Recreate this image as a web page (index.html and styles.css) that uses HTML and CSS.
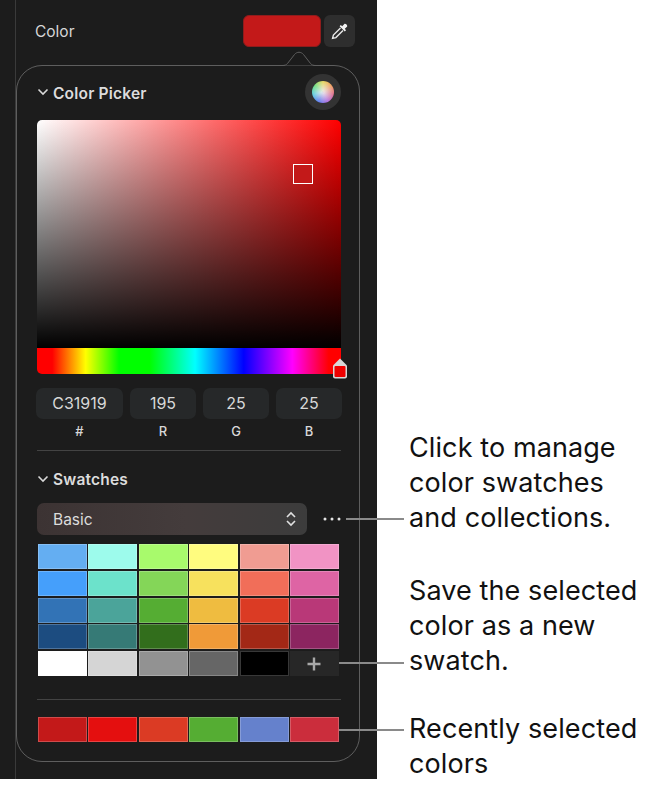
FILE: index.html
```html
<!DOCTYPE html>
<html lang="en">
<head>
  <meta charset="UTF-8">
  <title>Color Picker</title>
  <link rel="stylesheet" href="styles.css">
</head>
<body>
  <div class="page">
    <div class="panel">
      <div class="color-row">
        <span class="color-label">Color</span>
        <div class="color-well"></div>
        <button class="dropper">
          <svg width="20" height="20" viewBox="0 0 20 20">
            <path d="M10.5 7 L3.4 14.1 L2.6 17.4 L5.9 16.6 L13 9.5" fill="none" stroke="#e8e8e8" stroke-width="1.4"/>
            <path d="M9.6 5.2 L14.8 10.4 L16 9.2 L14.8 7.8 L17.2 5.4 A2.3 2.3 0 0 0 14.6 2.8 L12.2 5.2 L10.8 4 Z" fill="#f2f2f2"/>
          </svg>
        </button>
      </div>

      <div class="popover">
        <svg class="popover-arrow" width="44" height="16" viewBox="0 0 44 16">
          <path d="M0 15.5 H5 C8 15.5 9 15 10.5 13.5 L17.5 4.5 C20 1.5 24 1.5 26.5 4.5 L33.5 13.5 C35 15 36 15.5 39 15.5 H44" fill="#1c1c1c" stroke="#5e5e5e"/>
        </svg>

        <div class="section-head picker-head">
          <svg class="chevron" width="12" height="8" viewBox="0 0 12 8"><path d="M1.5 1.5 L6 6 L10.5 1.5" fill="none" stroke="#d8d8d8" stroke-width="1.6"/></svg>
          <span class="picker-title">Color Picker</span>
          <div class="wheel-btn"><div class="wheel"></div></div>
        </div>

        <div class="picker">
          <div class="picker-mark"></div>
        </div>
        <div class="hue">
          <svg class="hue-thumb" width="16" height="21" viewBox="0 0 16 21">
            <path d="M8 0.5 L15 7.5 V18.5 A2 2 0 0 1 13 20.5 H3 A2 2 0 0 1 1 18.5 V7.5 Z" fill="#d8d8d8"/>
            <rect x="2.5" y="8" width="11" height="11" rx="1" fill="#f00000"/>
          </svg>
        </div>

        <div class="fields">
          <div class="field">C31919</div>
          <div class="field">195</div>
          <div class="field">25</div>
          <div class="field">25</div>
          <div class="field-label">#</div>
          <div class="field-label">R</div>
          <div class="field-label">G</div>
          <div class="field-label">B</div>
        </div>

        <div class="rule rule-top"></div>

        <div class="section-head swatch-head">
          <svg class="chevron" width="12" height="8" viewBox="0 0 12 8"><path d="M1.5 1.5 L6 6 L10.5 1.5" fill="none" stroke="#d8d8d8" stroke-width="1.6"/></svg>
          <span>Swatches</span>
        </div>

        <div class="select-row">
          <div class="select">
            <span>Basic</span>
            <svg width="10" height="16" viewBox="0 0 10 16">
              <path d="M1 6 L5 2 L9 6 M1 10 L5 14 L9 10" fill="none" stroke="#e0e0e0" stroke-width="1.6"/>
            </svg>
          </div>
          <svg class="more" width="18" height="4" viewBox="0 0 18 4">
            <circle cx="2" cy="2" r="1.5" fill="#e4e4e4"/>
            <circle cx="9" cy="2" r="1.5" fill="#e4e4e4"/>
            <circle cx="16" cy="2" r="1.5" fill="#e4e4e4"/>
          </svg>
        </div>

        <div class="swatches">
          <div class="sw" style="background:#64aef2"></div>
          <div class="sw" style="background:#9dfbec"></div>
          <div class="sw" style="background:#a8fa6c"></div>
          <div class="sw" style="background:#fffc7f"></div>
          <div class="sw" style="background:#f09c92"></div>
          <div class="sw" style="background:#f193c4"></div>

          <div class="sw" style="background:#459ffb"></div>
          <div class="sw" style="background:#6ce2cb"></div>
          <div class="sw" style="background:#84d658"></div>
          <div class="sw" style="background:#f7e15d"></div>
          <div class="sw" style="background:#f16e59"></div>
          <div class="sw" style="background:#de64a4"></div>

          <div class="sw" style="background:#3273b6"></div>
          <div class="sw" style="background:#4ba49a"></div>
          <div class="sw" style="background:#55ad33"></div>
          <div class="sw" style="background:#efbc40"></div>
          <div class="sw" style="background:#db3b24"></div>
          <div class="sw" style="background:#b93878"></div>

          <div class="sw" style="background:#1c4c80"></div>
          <div class="sw" style="background:#367a76"></div>
          <div class="sw" style="background:#326e1c"></div>
          <div class="sw" style="background:#f09a38"></div>
          <div class="sw" style="background:#a32816"></div>
          <div class="sw" style="background:#8c2560"></div>

          <div class="sw sw-flat" style="background:#ffffff"></div>
          <div class="sw" style="background:#d5d5d5"></div>
          <div class="sw" style="background:#929292"></div>
          <div class="sw" style="background:#666666"></div>
          <div class="sw" style="background:#000000"></div>
          <div class="sw-add">
            <svg width="14" height="14" viewBox="0 0 14 14"><path d="M7 0.5 V13.5 M0.5 7 H13.5" stroke="#a8a8a8" stroke-width="2.4"/></svg>
          </div>
        </div>

        <div class="rule rule-bottom"></div>

        <div class="swatches">
          <div class="sw" style="background:#c31919"></div>
          <div class="sw" style="background:#e40f0f"></div>
          <div class="sw" style="background:#db3b24"></div>
          <div class="sw" style="background:#55ad33"></div>
          <div class="sw" style="background:#6581cc"></div>
          <div class="sw" style="background:#cb2d3c"></div>
        </div>
      </div>
    </div>

    <div class="notes">
      <p class="note">Click to manage color swatches and collections.</p>
      <p class="note note-save">Save the selected color as a new swatch.</p>
      <p class="note note-recent">Recently selected colors</p>
    </div>

    <div class="leader leader-manage"></div>
    <div class="leader leader-save"></div>
    <div class="leader leader-recent"></div>
  </div>
</body>
</html>
```

FILE: styles.css
```css
* { margin: 0; padding: 0; box-sizing: border-box; }
body {
  background: #fff;
  font-family: "Inter", "Liberation Sans", sans-serif;
}
.page {
  position: relative;
  display: flex;
  width: 670px;
  height: 788px;
  overflow: hidden;
}

/* dark inspector panel */
.panel {
  width: 377px;
  height: 779px;
  padding-top: 15px;
  background: linear-gradient(to right, #1c1c1c 15px, #3a3a3a 15px, #3a3a3a 16px, #1c1c1c 16px);
}
.color-row {
  display: flex;
  align-items: center;
  height: 32px;
  padding: 0 22px 0 35px;
}
.color-label {
  flex: 1;
  font-size: 15.5px;
  color: #d6d6d6;
}
.color-well {
  width: 78px;
  height: 32px;
  border-radius: 6px;
  background: #c31919;
  border: 1px solid #8f1c1c;
}
.dropper {
  display: flex;
  align-items: center;
  justify-content: center;
  width: 31px;
  height: 32px;
  margin-left: 3px;
  border: none;
  border-radius: 6px;
  background: #2e2e2e;
}

/* popover */
.popover {
  position: relative;
  width: 344px;
  height: 697px;
  margin: 18px 0 0 16px;
  padding: 0 18px 0 20px;
  border: 1px solid #5e5e5e;
  border-radius: 26px;
  background: #1c1c1c;
}
.popover-arrow {
  position: absolute;
  top: -16px;
  left: 260px;
  overflow: visible;
}
.section-head {
  display: flex;
  align-items: center;
  gap: 4px;
  font-size: 15.5px;
  font-weight: 600;
  letter-spacing: 0.2px;
  color: #dcdcdc;
}
.picker-head {
  height: 36px;
  margin-top: 8px;
  margin-bottom: 10px;
}
.picker-title { padding-top: 2px; }
.wheel-btn {
  display: flex;
  align-items: center;
  justify-content: center;
  width: 36px;
  height: 36px;
  margin-left: auto;
  border-radius: 50%;
  background: #333333;
}
.wheel {
  width: 22px;
  height: 22px;
  border-radius: 50%;
  background:
    radial-gradient(circle, rgba(235, 235, 235, 0.85) 10%, rgba(235, 235, 235, 0) 70%),
    conic-gradient(#e8d860, #f0a060, #e07090, #b070e0, #6080f0, #60d0e0, #70e080, #e8d860);
}

/* saturation / brightness square */
.picker {
  position: relative;
  height: 228px;
  border-radius: 5px 5px 0 0;
  background:
    linear-gradient(to bottom, rgba(0, 0, 0, 0), #000),
    linear-gradient(to right, #fff, #f00);
}
.picker-mark {
  position: absolute;
  top: 44px;
  left: 256px;
  width: 20px;
  height: 20px;
  background: #c31919;
  border: 1px solid #fff;
}
.hue {
  position: relative;
  height: 26px;
  border-radius: 0 0 0 5px;
  background: linear-gradient(to right,
    #f00 0, #f00 5%, #ff0 16%, #0f0 27%, #0f0 37%, #0ff 52%,
    #00f 68%, #f0f 84%, #f00 96%, #f00 100%);
}
.hue-thumb {
  position: absolute;
  top: 10px;
  right: -7px;
}

/* hex and rgb fields */
.fields {
  display: grid;
  grid-template-columns: 87px 66px 66px 66px;
  column-gap: 7px;
  margin: 14px -1px 0;
}
.field {
  height: 31px;
  border-radius: 7px;
  background: #262829;
  font-size: 16px;
  line-height: 31px;
  text-align: center;
  color: #d8d8d8;
}
.field-label {
  margin-top: 5px;
  font-size: 13px;
  font-weight: 500;
  line-height: 15px;
  text-align: center;
  color: #d8d8d8;
}
.rule {
  height: 1px;
  background: #434343;
}
.rule-top { margin-top: 11px; }
.rule-bottom { margin: 23px 0 17px; }

.swatch-head {
  height: 18px;
  margin-top: 19px;
}
.select-row {
  display: flex;
  align-items: center;
  margin-top: 15px;
}
.select {
  display: flex;
  align-items: center;
  justify-content: space-between;
  width: 270px;
  height: 32px;
  padding: 0 11px 0 16px;
  border-radius: 7px;
  background: linear-gradient(to right, #3c3333, #443c3c 55%, #3c3c3c);
  font-size: 15.5px;
  color: #dcdcdc;
}
.more { margin-left: 16px; }

/* swatch grids */
.swatches {
  display: grid;
  grid-template-columns: repeat(6, 49px);
  grid-auto-rows: 25px;
  column-gap: 1.4px;
  row-gap: 1.75px;
  margin-left: 1px;
}
.select-row + .swatches { margin-top: 9px; }
.sw {
  border: 1px solid rgba(255, 255, 255, 0.22);
}
.sw-flat { border: none; }
.sw-add {
  display: flex;
  align-items: center;
  justify-content: center;
  background: #272727;
}

/* callouts */
.notes {
  flex: 1;
  padding: 430px 0 0 32px;
}
.note {
  max-width: 240px;
  font-size: 27px;
  letter-spacing: 0.1px;
  line-height: 35px;
  color: #111;
}
.note-save { margin-top: 38px; }
.note-recent { margin-top: 33px; }
.leader {
  position: absolute;
  height: 2px;
  background: #8a8a8a;
}
.leader-manage { top: 518px; left: 346px; width: 58px; }
.leader-save { top: 662px; left: 339px; width: 65px; }
.leader-recent { top: 729px; left: 339px; width: 65px; }
```
